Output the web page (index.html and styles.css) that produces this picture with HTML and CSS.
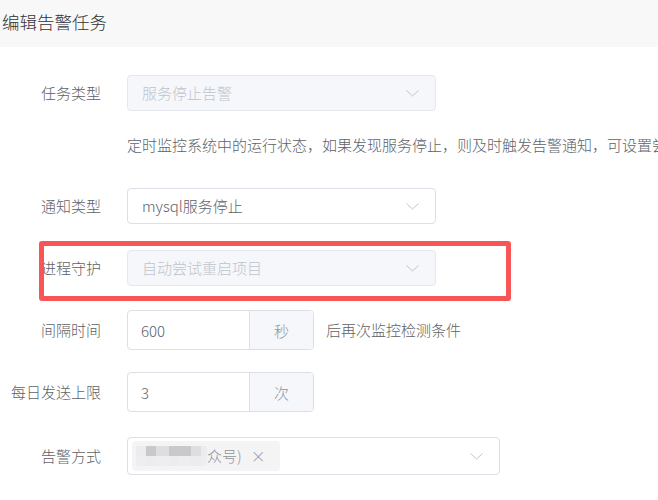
FILE: index.html
```html
<!DOCTYPE html>
<html lang="zh-CN">
<head>
<meta charset="utf-8">
<title>编辑告警任务</title>
<link rel="stylesheet" href="styles.css">
</head>
<body>
<div class="header">编辑告警任务</div>
<div class="form">
  <div class="row">
    <div class="label">任务类型</div>
    <div class="select disabled w310">
      <span class="val">服务停止告警</span>
      <svg class="chev" width="13" height="7" viewBox="0 0 13 7"><polyline points="0.5,0.5 6.5,6 12.5,0.5" fill="none" stroke="#c0c4cc" stroke-width="1"/></svg>
    </div>
  </div>
  <div class="desc">定时监控系统中的运行状态，如果发现服务停止，则及时触发告警通知，可设置尝试</div>
  <div class="row">
    <div class="label">通知类型</div>
    <div class="select w310">
      <span class="val">mysql服务停止</span>
      <svg class="chev" width="13" height="7" viewBox="0 0 13 7"><polyline points="0.5,0.5 6.5,6 12.5,0.5" fill="none" stroke="#c0c4cc" stroke-width="1"/></svg>
    </div>
  </div>
  <div class="row">
    <div class="label">进程守护</div>
    <div class="select disabled w310">
      <span class="val">自动尝试重启项目</span>
      <svg class="chev" width="13" height="7" viewBox="0 0 13 7"><polyline points="0.5,0.5 6.5,6 12.5,0.5" fill="none" stroke="#c0c4cc" stroke-width="1"/></svg>
    </div>
    <div class="mark"></div>
  </div>
  <div class="row">
    <div class="label">间隔时间</div>
    <div class="group">
      <div class="inp">600</div>
      <div class="addon">秒</div>
    </div>
    <div class="suffix">后再次监控检测条件</div>
  </div>
  <div class="row">
    <div class="label">每日发送上限</div>
    <div class="group">
      <div class="inp">3</div>
      <div class="addon">次</div>
    </div>
  </div>
  <div class="row last">
    <div class="label">告警方式</div>
    <div class="select multi w374">
      <span class="tag">
        <span class="mosaic">
          <i class="m1"></i><i class="m3"></i><i class="m2"></i><i class="m3"></i><i class="m3"></i><i class="m2"></i><i class="m1"></i>
          <i class="m4"></i><i class="m1"></i><i class="m4"></i><i class="m1"></i><i class="m4"></i><i class="m1"></i><i class="m4"></i>
        </span>
        <span class="tagtext">众号)</span>
        <span class="close">×</span>
      </span>
      <svg class="chev" width="13" height="7" viewBox="0 0 13 7"><polyline points="0.5,0.5 6.5,6 12.5,0.5" fill="none" stroke="#c0c4cc" stroke-width="1"/></svg>
    </div>
  </div>
</div>
</body>
</html>
```
FILE: styles.css
```css
html, body {
  margin: 0;
  padding: 0;
  overflow: hidden;
  background: #fff;
}
body {
  font-family: "Noto Sans CJK SC", "Noto Sans", sans-serif;
  font-size: 15px;
  font-weight: 300;
  color: #606266;
  width: 658px;
  height: 500px;
}
.header {
  height: 47px;
  line-height: 44px;
  background: #f8f8f8;
  padding-left: 2px;
  font-size: 17.5px;
  color: #333;
}
.form {
  padding-top: 15px;
}
.row {
  position: relative;
  display: flex;
  align-items: center;
  height: 62px;
}
.row.last {
  height: 66px;
}
.label {
  width: 101px;
  flex: none;
  text-align: right;
  margin-right: 26px;
  line-height: 20px;
  white-space: nowrap;
}
.select {
  position: relative;
  box-sizing: border-box;
  height: 36px;
  border: 1px solid #dcdfe6;
  border-radius: 4px;
  background: #fff;
  display: flex;
  align-items: center;
  padding-left: 14px;
  color: #606266;
}
.select.disabled {
  background: #f5f7fa;
  border-color: #e4e7ed;
  color: #c0c4cc;
}
.w310 { width: 309px; }
.w374 { width: 373px; }
.select.multi {
  height: 38px;
  padding-left: 4px;
}
.val {
  line-height: 20px;
}
.chev {
  position: absolute;
  right: 16px;
  top: 50%;
  margin-top: -3px;
}
.desc {
  margin: 11px 0 20px 127px;
  line-height: 20px;
  white-space: nowrap;
  overflow: hidden;
}
.group {
  box-sizing: border-box;
  display: flex;
  width: 187px;
  height: 40px;
  border: 1px solid #dcdfe6;
  border-radius: 4px;
  overflow: hidden;
}
.inp {
  width: 121px;
  flex: none;
  display: flex;
  align-items: center;
  padding-left: 13px;
  box-sizing: border-box;
  color: #606266;
}
.addon {
  flex: 1;
  border-left: 1px solid #dcdfe6;
  background: #f5f7fa;
  color: #909399;
  display: flex;
  align-items: center;
  justify-content: center;
}
.suffix {
  margin-left: 12px;
  line-height: 20px;
}
.mark {
  position: absolute;
  left: 39px;
  top: 4px;
  width: 472px;
  height: 60px;
  box-sizing: border-box;
  border: 5px solid #f85656;
  border-radius: 3px;
}
.tag {
  display: flex;
  align-items: center;
  height: 30px;
  width: 148px;
  box-sizing: border-box;
  background: #f4f4f5;
  border-radius: 4px;
  padding-left: 4px;
  color: #909399;
}
.mosaic {
  display: grid;
  grid-template-columns: 10px 10px 13px 10px 12px 10px 6px;
  grid-template-rows: 10px 10px;
  width: 71px;
}
.mosaic i { display: block; }
.m1 { background: #ececee; }
.m2 { background: #dedee1; }
.m3 { background: #c9c9cc; }
.m4 { background: #eeeef0; }
.tagtext {
  line-height: 20px;
  color: #909399;
}
.close {
  margin-left: 9px;
  font-size: 15px;
  color: #909399;
  line-height: 20px;
}
```
